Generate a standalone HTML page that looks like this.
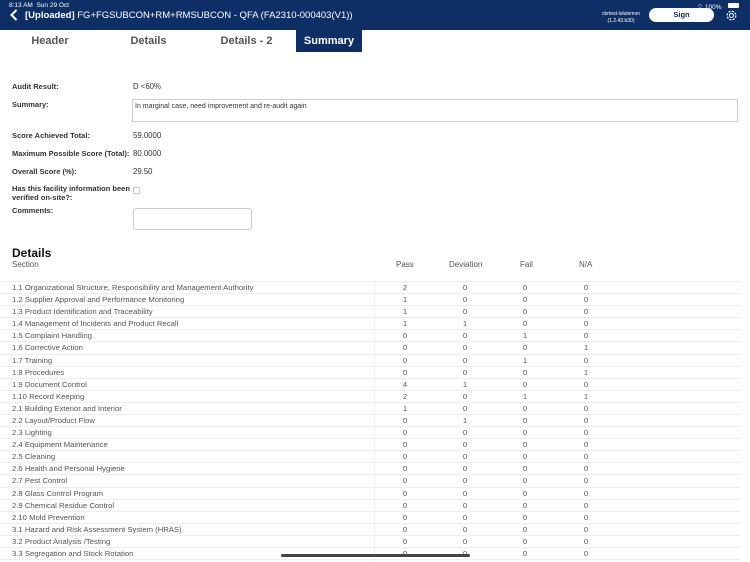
<!DOCTYPE html>
<html><head><meta charset="utf-8"><style>
*{margin:0;padding:0;box-sizing:border-box}
body{width:750px;height:562px;overflow:hidden;background:#fff;font-family:"Liberation Sans",sans-serif;position:relative;color:#333}
.top{position:absolute;left:0;top:0;width:750px;height:30px;background:#0d2f66;color:#fff}
.abs{position:absolute}
.tab{position:absolute;top:30px;height:22px;line-height:22px;text-align:center;font-size:11px;font-weight:bold;color:#555}
.lab{position:absolute;left:12px;font-size:7.5px;font-weight:bold;color:#333}
.val{position:absolute;left:133px;font-size:7.8px;color:#333}
.row{position:absolute;left:0;width:740px;height:12.1px;border-bottom:1px solid #eee;font-size:7.7px;color:#555;line-height:11px}
.row span{position:absolute;top:0}
.c{width:20px;text-align:center}
</style></head><body>
<div class="top">
<div class="abs" style="left:9px;top:2px;font-size:6.5px">8:13 AM&nbsp; Sun 29 Oct</div>
<svg class="abs" style="left:10px;top:9px" width="8" height="12" viewBox="0 0 8 12"><path d="M6.5 1 L1.5 6 L6.5 11" stroke="#fff" stroke-width="2" fill="none"/></svg>
<div class="abs" style="left:25px;top:10px;font-size:9.5px"><b>[Uploaded]</b> FG+FGSUBCON+RM+RMSUBCON - QFA (FA2310-000403(V1))</div>
<div class="abs" style="left:596px;top:11px;font-size:5px;text-align:center;width:50px;line-height:7px">cbrtest-lululemon<br>(1.2.43.b30)</div>
<div class="abs" style="left:649px;top:8px;width:65px;height:14px;background:#fff;border-radius:7px;color:#0d2f66;font-size:7.5px;font-weight:bold;text-align:center;line-height:14px">Sign</div>
<div class="abs" style="left:697px;top:2px;font-size:6.5px">⌔ 100%</div>
<div class="abs" style="left:728px;top:3px;width:11px;height:5px;background:#fff;border-radius:1px"></div>
<svg class="abs" style="left:725px;top:9px" width="13" height="13" viewBox="0 0 13 13"><circle cx="6.5" cy="6.5" r="4.3" stroke="#fff" stroke-width="1.3" fill="none" stroke-dasharray="2 1.4"/><circle cx="6.5" cy="6.5" r="2" stroke="#fff" stroke-width="1" fill="none"/></svg>
</div>
<div class="tab" style="left:0;width:100px">Header</div>
<div class="tab" style="left:100px;width:97px">Details</div>
<div class="tab" style="left:197px;width:99px">Details - 2</div>
<div class="tab" style="left:296px;width:66px;background:#0d2f66;color:#fff">Summary</div>

<div class="lab" style="top:82px">Audit Result:</div><div class="val" style="top:82px">D &lt;60%</div>
<div class="lab" style="top:100px">Summary:</div>
<div class="abs" style="left:132px;top:99px;width:606px;height:23px;border:1px solid #ccc;font-size:7px;padding:3px 2px">In marginal case, need improvement and re-audit again</div>
<div class="lab" style="top:131px">Score Achieved Total:</div><div class="val" style="top:131px">59.0000</div>
<div class="lab" style="top:149px">Maximum Possible Score (Total):</div><div class="val" style="top:149px">80.0000</div>
<div class="lab" style="top:167px">Overall Score (%):</div><div class="val" style="top:167px">29.50</div>
<div class="lab" style="top:184px;line-height:9px">Has this facility information been<br>verified on-site?:</div>
<div class="abs" style="left:133px;top:187px;width:7px;height:7px;border:1px solid #ccc;border-radius:1px"></div>
<div class="lab" style="top:206px">Comments:</div>
<div class="abs" style="left:133px;top:208px;width:119px;height:22px;border:1px solid #ccc;border-radius:3px"></div>

<div class="abs" style="left:12px;top:246px;font-size:12px;font-weight:bold;color:#111">Details</div>
<div class="abs" style="left:12px;top:260px;font-size:8px;color:#555">Section</div>
<div class="abs" style="left:396px;top:260px;font-size:8px;color:#555">Pass</div>
<div class="abs" style="left:449px;top:260px;font-size:8px;color:#555">Deviation</div>
<div class="abs" style="left:520px;top:260px;font-size:8px;color:#555">Fail</div>
<div class="abs" style="left:579px;top:260px;font-size:8px;color:#555">N/A</div>
<div class="abs" style="left:0;top:281px;width:740px;border-top:1px solid #eee"></div>
<div class="abs" style="left:374px;top:281px;width:1px;height:281px;background:#eee"></div>
<div id="rows"></div>
<div class="abs" style="left:281px;top:554px;width:189px;height:3px;background:#444;border-radius:2px"></div>
<script>
var d=[["1.1 Organizational Structure, Responsibility and Management Authority",2,0,0,0],["1.2 Supplier Approval and Performance Monitoring",1,0,0,0],["1.3 Product Identification and Traceability",1,0,0,0],["1.4 Management of Incidents and Product Recall",1,1,0,0],["1.5 Complaint Handling",0,0,1,0],["1.6 Corrective Action",0,0,0,1],["1.7 Training",0,0,1,0],["1.8 Procedures",0,0,0,1],["1.9 Document Control",4,1,0,0],["1.10 Record Keeping",2,0,1,1],["2.1 Building Exterior and Interior",1,0,0,0],["2.2 Layout/Product Flow",0,1,0,0],["2.3 Lighting",0,0,0,0],["2.4 Equipment Maintenance",0,0,0,0],["2.5 Cleaning",0,0,0,0],["2.6 Health and Personal Hygiene",0,0,0,0],["2.7 Pest Control",0,0,0,0],["2.8 Glass Control Program",0,0,0,0],["2.9 Chemical Residue Control",0,0,0,0],["2.10 Mold Prevention",0,0,0,0],["3.1 Hazard and Risk Assessment System (HRAS)",0,0,0,0],["3.2 Product Analysis /Testing",0,0,0,0],["3.3 Segregation and Stock Rotation",0,0,0,0]];
var h="";d.forEach(function(r,i){h+='<div class="row" style="top:'+(282+i*12.09)+'px"><span style="left:12px">'+r[0]+'</span><span class="c" style="left:395px">'+r[1]+'</span><span class="c" style="left:455px">'+r[2]+'</span><span class="c" style="left:515px">'+r[3]+'</span><span class="c" style="left:576px">'+r[4]+'</span></div>'});
document.getElementById("rows").innerHTML=h;
</script>
</body></html>
